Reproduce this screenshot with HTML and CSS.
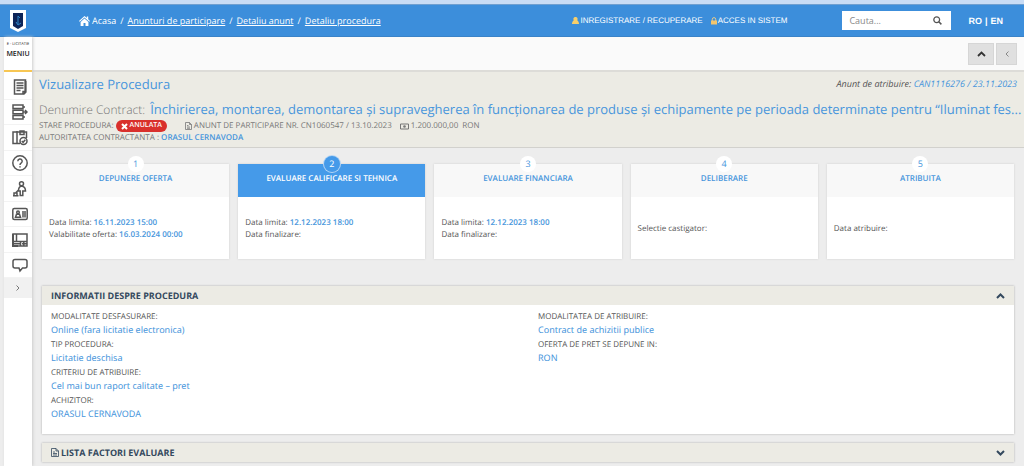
FILE: index.html
```html
<!DOCTYPE html>
<html lang="ro">
<head>
<meta charset="utf-8">
<meta name="viewport" content="width=device-width, initial-scale=1">
<title>Vizualizare Procedura</title>
<link rel="stylesheet" href="styles.css">
</head>
<body>
<header class="topbar">
  <a class="logo" href="#" aria-label="E-licitatie">
    <svg width="16" height="22" viewBox="0 0 16 22"><path d="M0 0h16v18l-8 4-8-4z" fill="#fff"/><path d="M3 3h10v13l-5 3-5-3z" fill="#0d2458"/><path d="M8 6v8M6 12l2 3 3-2M8 6l2 2" stroke="#2f82c4" fill="none"/></svg>
  </a>
  <nav class="crumbs" aria-label="Navigare">
    <a class="home" href="#"><svg width="11" height="10" viewBox="0 0 11 10"><path d="M5.500 0L0 5l.7.8L5.500 1.600l4.800 4.200.7-.8-1.800-1.700V.6H7.800V2zM5.500 2.500L1.600 6v4h2.900V7h2v3h2.900V6z" fill="#fff"/></svg>Acasa</a>
    <span>/</span><a href="#">Anunturi de participare</a>
    <span>/</span><a href="#">Detaliu anunt</a>
    <span>/</span><a href="#">Detaliu procedura</a>
  </nav>
  <nav class="account" aria-label="Cont">
    <a href="#"><svg width="7" height="8" viewBox="0 0 7 8"><path d="M3.500 0a2 2 0 0 1 1.700 3.200C6.500 4 7 5.500 7 7H0c0-1.500.5-3 1.800-3.800A2 2 0 0 1 3.500 0z" fill="#f8cf6b"/></svg>INREGISTRARE / RECUPERARE</a>
    <a href="#"><svg width="6" height="8" viewBox="0 0 6 8"><path d="M1.300 4V2.300a1.700 1.700 0 0 1 3.400 0V4" fill="none" stroke="#e6c98a"/><path d="M0 3.500h6V7.500H0z" fill="#f3c56d"/></svg>ACCES IN SISTEM</a>
  </nav>
  <form class="search">
    <input type="text" placeholder="Cauta..." aria-label="Cauta">
    <button type="button" aria-label="Cauta"><svg width="9" height="9" viewBox="0 0 9 9"><circle cx="3.700" cy="3.700" r="2.900" fill="none" stroke="#555" stroke-width="1.300"/><path d="M5.800 5.800L8.400 8.400" stroke="#555" stroke-width="1.500"/></svg></button>
  </form>
  <div class="lang"><a href="#">RO</a><span>|</span><a href="#">EN</a></div>
</header>

<div class="shell">
  <aside class="sidebar">
    <div class="menu-head"><span class="brand">E - LICITATIE</span><span>MENIU</span></div>
    <nav class="menu" aria-label="Meniu">
      <a href="#" aria-label="Anunturi"><svg viewBox="0 0 16 16"><path d="M2.500 1h11v12l-2 2h-9z"/><path d="M4.500 4h7M4.500 6.500h7M4.500 9h7M4.500 11.500h4M11 15v-2.500h2.500"/><path d="M13.500 2v11l-2 2" stroke-width="2"/></svg></a>
      <a href="#" aria-label="Proceduri"><svg viewBox="0 0 16 16"><path d="M1 1h10v3.500H1zM1 6.200h10v3.500H1zM1 11.500h10V15H1zM11 3h2M11 13h2M11 8h4M13 6l2 2-2 2"/></svg></a>
      <a href="#" aria-label="Contracte"><svg viewBox="0 0 16 16"><path d="M5 2H1v11.500h6M5 1v13M5 2h9.500v6M8 2.500V1h4v3.500H8zM8 13.500H5"/><circle cx="11.500" cy="11" r="3.500"/><path d="M9.800 11l1.300 1.300 2.200-2.500"/></svg></a>
      <a href="#" aria-label="Ajutor"><svg viewBox="0 0 16 16"><circle cx="8" cy="8" r="7.200"/><path d="M5.800 6.200a2.200 2.200 0 1 1 3.300 1.900C8.200 8.700 8 9 8 10M8 11.200v1.400"/></svg></a>
      <a href="#" aria-label="Utilizatori"><svg viewBox="0 0 16 16"><circle cx="9.500" cy="2.800" r="2"/><path d="M9.500 5C7 5.500 6.500 7.500 6.500 10h1.700v4.500h2.600V10h2.700C13.500 7.500 12.500 5.500 9.500 5zM1 14.800h5.500M2 14.500V12h3v2.500M6.500 9L4 11.500"/></svg></a>
      <a href="#" aria-label="Profil"><svg viewBox="0 0 16 16"><rect x=".8" y="2.500" width="14.400" height="11" rx="1.500"/><path d="M3.500 11.300l1-3h3l1 3zM11 5v6.500M13 5v6.500"/><circle cx="6" cy="6.300" r="1.300"/></svg></a>
      <a href="#" aria-label="Rapoarte"><svg viewBox="0 0 16 16"><path d="M1 2h14v12H1zM4.500 2v7.500M1 9.500h14"/><path d="M2 11.800h6M10 11.800h5M8.500 9.500V14M11.800 9.500V14"/><path d="M1 2v12h5" stroke-width="2"/></svg></a>
      <a href="#" aria-label="Mesaje"><svg viewBox="0 0 16 16"><path d="M3 2.500h10q2 0 2 2V9q0 2-2 2h-2.500L8 14l-1-3H3q-2 0-2-2V4.500q0-2 2-2z"/></svg></a>
    </nav>
    <button class="expand" type="button" aria-label="Extinde meniul"><svg width="4" height="6" viewBox="0 0 4 6"><path d="M.5.5L3 3 .5 5.500" fill="none" stroke="#777"/></svg></button>
  </aside>

  <main class="main">
    <div class="toolbar">
      <button class="up" type="button" aria-label="Sus"><svg width="9" height="6" viewBox="0 0 9 6"><path d="M1 5l3.500-3.500L8 5" fill="none" stroke="#333" stroke-width="1.800"/></svg></button>
      <button class="back" type="button" aria-label="Inapoi"><svg width="4" height="6" viewBox="0 0 4 6"><path d="M3.500.5L1 3l2.500 2.500" fill="none" stroke="#888"/></svg></button>
    </div>

    <section class="summary">
      <div class="summary-top">
        <h1>Vizualizare Procedura</h1>
        <p class="award">Anunt de atribuire: <a href="#">CAN1116276 / 23.11.2023</a></p>
      </div>
      <h2>Denumire Contract: <span>Închirierea, montarea, demontarea și supravegherea în funcționarea de produse și echipamente pe perioada determinate pentru “Iluminat fes...</span></h2>
      <div class="facts">
        <span class="state">STARE PROCEDURA: <b class="badge"><svg width="7" height="7" viewBox="0 0 7 7"><path d="M1 1l5 5M6 1L1 6" stroke="#fff" stroke-width="2"/></svg>ANULATA</b></span>
        <span class="notice"><svg width="7" height="8" viewBox="0 0 7 8"><path d="M.5.500h4l2 2v5h-6zM4.500.500v2h2M2 3.500h1.500M2 5h3M2 6.300h3" fill="none" stroke="#777" stroke-width=".8"/></svg>ANUNT DE PARTICIPARE NR. CN1060547 / 13.10.2023</span>
        <span><svg width="9" height="7" viewBox="0 0 9 7"><path d="M.5 1h8v5h-8z" fill="none" stroke="#777"/><circle cx="4.500" cy="3.500" r="1.300" fill="#777"/></svg>1.200.000,00&nbsp; RON</span>
      </div>
      <p class="authority">AUTORITATEA CONTRACTANTA : <a href="#">ORASUL CERNAVODA</a></p>
    </section>

    <ol class="steps">
      <li class="step"><span class="num">1</span><h3>DEPUNERE OFERTA</h3><div class="step-body"><p>Data limita: <b>16.11.2023 15:00</b></p><p>Valabilitate oferta: <b>16.03.2024 00:00</b></p></div></li>
      <li class="step active"><span class="num">2</span><h3>EVALUARE CALIFICARE SI TEHNICA</h3><div class="step-body"><p>Data limita: <b>12.12.2023 18:00</b></p><p>Data finalizare:</p></div></li>
      <li class="step"><span class="num">3</span><h3>EVALUARE FINANCIARA</h3><div class="step-body"><p>Data limita: <b>12.12.2023 18:00</b></p><p>Data finalizare:</p></div></li>
      <li class="step"><span class="num">4</span><h3>DELIBERARE</h3><div class="step-body"><p>Selectie castigator:</p></div></li>
      <li class="step"><span class="num">5</span><h3>ATRIBUITA</h3><div class="step-body"><p>Data atribuire:</p></div></li>
    </ol>

    <section class="panel">
      <h3><button type="button" class="panel-head"><span>INFORMATII DESPRE PROCEDURA</span><svg class="chev" width="9" height="6" viewBox="0 0 9 6"><path d="M1 5l3.500-3.500L8 5"/></svg></button></h3>
      <div class="panel-body">
        <dl>
          <div><dt>MODALITATE DESFASURARE:</dt><dd>Online (fara licitatie electronica)</dd></div>
          <div><dt>TIP PROCEDURA:</dt><dd>Licitatie deschisa</dd></div>
          <div><dt>CRITERIU DE ATRIBUIRE:</dt><dd>Cel mai bun raport calitate – pret</dd></div>
          <div><dt>ACHIZITOR:</dt><dd>ORASUL CERNAVODA</dd></div>
        </dl>
        <dl>
          <div><dt>MODALITATEA DE ATRIBUIRE:</dt><dd>Contract de achizitii publice</dd></div>
          <div><dt>OFERTA DE PRET SE DEPUNE IN:</dt><dd>RON</dd></div>
        </dl>
      </div>
    </section>

    <section class="panel">
      <h3><button type="button" class="panel-head"><span><svg width="8" height="9" viewBox="0 0 8 9"><path d="M.5.500h4.500l2.500 2.500v5.500h-7zM5 .500V3h2.500M2 4h2M2 5.500h4M2 7h4" fill="none" stroke="#34495e" stroke-width=".8"/></svg>LISTA FACTORI EVALUARE</span><svg class="chev" width="9" height="6" viewBox="0 0 9 6"><path d="M1 1l3.500 3.500L8 1"/></svg></button></h3>
    </section>
  </main>
</div>
</body>
</html>
```
FILE: styles.css
```css
* { box-sizing: border-box; }
body {
  margin: 0;
  min-height: 100vh;
  display: flex;
  flex-direction: column;
  background: #ededed;
  color: #555;
  font: 8px/12px "Open Sans", "Noto Sans", sans-serif;
  text-rendering: geometricPrecision;
}
h1, h2, h3, p, ol, dl, dd { margin: 0; padding: 0; font-weight: 400; }
a { color: inherit; text-decoration: none; }
button { font: inherit; color: inherit; border: 0; padding: 0; cursor: pointer; text-rendering: inherit; }
svg { flex: none; }

.topbar {
  display: flex;
  align-items: center;
  height: 37px;
  padding: 0 21px 0 10px;
  border-top: 4px solid #c8dcf5;
  background: #3c8edb;
  color: #fff;
  box-shadow: inset 0 1px #6f9fd0, inset 0 -1px #3a83c8;
}
.logo { display: flex; margin-right: 52px; }
.crumbs { display: flex; gap: 4px; padding-left: 1px; font-size: 9px; }
.crumbs a { text-decoration: underline; }
.crumbs .home { display: flex; align-items: center; gap: 2px; text-decoration: none; }
.account {
  display: flex;
  gap: 8px;
  margin-left: auto;
  font: 8px/12px "Liberation Sans", sans-serif;
}
.account a { display: flex; align-items: center; gap: 1px; }
.search {
  display: flex;
  align-items: center;
  width: 109px;
  height: 19px;
  margin-left: 55px;
  background: #fff;
}
.search input {
  flex: 1;
  min-width: 0;
  padding: 0 7px;
  border: 0;
  background: none;
  font: inherit;
  font-size: 9px;
  color: #555;
}
.search input::placeholder { color: #888; }
.search button { display: flex; padding: 0 9px; background: none; }
.lang {
  display: flex;
  gap: 3px;
  margin-left: 17px;
  font: bold 9px/12px "Liberation Sans", sans-serif;
}

.shell { display: flex; flex: 1; }
.sidebar {
  display: flex;
  flex-direction: column;
  width: 28px;
  margin-left: 4px;
  background: #fff;
  box-shadow: 1px 0 3px #ccc;
  z-index: 1;
}
.menu-head {
  display: flex;
  flex-direction: column;
  align-items: center;
  height: 35px;
  padding-top: 3px;
  border-bottom: 2px solid #f7c653;
  color: #222;
  font-size: 7px;
  font-weight: 600;
}
.menu-head .brand { font-size: 4px; line-height: 9px; font-weight: 400; }
.menu { display: flex; flex-direction: column; padding-top: 2px; }
.menu a {
  display: flex;
  align-items: center;
  justify-content: center;
  padding-left: 4px;
  height: 26px;
  border-bottom: 1px solid #f3f3f3;
}
.menu a:nth-child(even) { height: 25px; }
.menu svg { width: 16px; height: 16px; fill: none; stroke: #555; stroke-width: 1.5; }
.expand {
  display: flex;
  align-items: center;
  justify-content: center;
  height: 20px;
  background: #f1f1f1;
}

.main { flex: 1; min-width: 0; }
.toolbar {
  display: flex;
  justify-content: flex-end;
  align-items: center;
  gap: 2px;
  height: 33px;
  padding-right: 7px;
  background: #fafafa;
}
.toolbar button {
  display: flex;
  align-items: center;
  justify-content: center;
  height: 22px;
  background: #e0e0e0;
  border: 1px solid #d6d6d6;
}
.toolbar .up { width: 26px; }
.toolbar .back { width: 21px; }

.summary {
  height: 78px;
  padding: 4px 7px 0;
  border-top: 2px solid #dddcd8;
  border-bottom: 1px solid #d2d1cd;
  background: #ecebe4;
  color: #777;
}
.summary-top { display: flex; justify-content: space-between; align-items: center; }
h1 { font-size: 13px; line-height: 16px; color: #4896dc; }
.award { font-size: 9px; font-style: italic; color: #555; }
.award a { color: #4896dc; }
h2 {
  margin: 8px 0 1px;
  font-size: 12px;
  font-weight: 300;
  line-height: 18px;
  white-space: nowrap;
}
h2 span { margin-left: 2px; color: #4896dc; font-size: 13px; font-weight: 400; }
.facts { display: flex; align-items: center; white-space: nowrap; }
.facts > span { display: flex; align-items: center; gap: 2px; }
.facts .notice { margin: 0 8px 0 18px; }
.badge {
  display: flex;
  align-items: center;
  gap: 2px;
  height: 12px;
  padding: 0 5px;
  border-radius: 6px;
  background: #d9302c;
  color: #fff;
  font-size: 7px;
  font-weight: 600;
}
.authority a { color: #4896dc; font-weight: 600; }

.steps {
  display: grid;
  grid-template-columns: repeat(5, 1fr);
  gap: 9px;
  margin: 16px 10px 0;
  list-style: none;
}
.step {
  position: relative;
  background: #fff;
  box-shadow: 0 0 2px #ccc;
}
.step h3 {
  height: 33px;
  padding-top: 9px;
  background: #f8f8f8;
  color: #4896dc;
  font-size: 8px;
  font-weight: 600;
  text-align: center;
}
.num {
  position: absolute;
  top: -8px;
  left: calc(50% - 8px);
  width: 16px;
  height: 16px;
  border-radius: 50%;
  background: #fff;
  color: #4896dc;
  font-size: 9px;
  line-height: 16px;
  text-align: center;
}
.active h3 { background: #459ae9; color: #fff; }
.active .num { background: #459ae9; color: #fff; box-shadow: 0 0 0 1px #b5d5f4; }
.step-body {
  display: flex;
  flex-direction: column;
  justify-content: center;
  height: 62px;
  padding: 2px 7px 0;
}
.step-body b { color: #4896dc; font-weight: 600; }

.panel { margin: 27px 10px 0; background: #fff; box-shadow: 0 0 2px #aaa; }
.panel + .panel { margin-top: 9px; }
.panel-head {
  display: flex;
  align-items: center;
  justify-content: space-between;
  width: 100%;
  height: 19px;
  padding: 0 9px;
  background: #ecebe4;
  color: #34495e;
  font-size: 9px;
  font-weight: 700;
}
.panel h3 { font-size: 8px; }
.panel-head span { display: flex; align-items: center; gap: 2px; }
.chev { fill: none; stroke: #34495e; stroke-width: 2; }
.panel-body {
  display: grid;
  grid-template-columns: 1fr 1fr;
  gap: 20px;
  min-height: 129px;
  padding: 6px 9px;
}
.panel-body dl { display: flex; flex-direction: column; gap: 2px; }
dt { font-weight: 500; }
dd { font-family: "Noto Sans", "Open Sans", sans-serif; font-size: 9px; line-height: 14px; color: #4896dc; }
```
